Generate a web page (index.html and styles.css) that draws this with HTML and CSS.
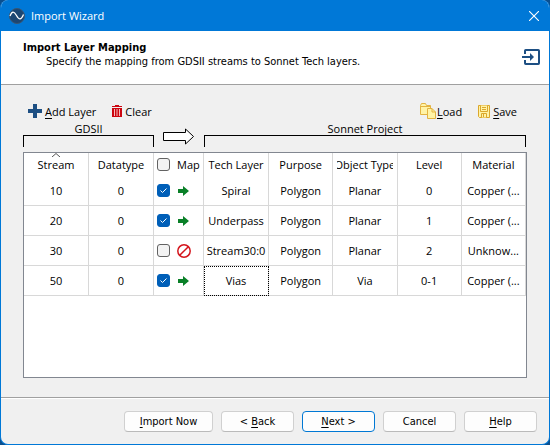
FILE: index.html
```html
<!DOCTYPE html>
<html lang="en">
<head>
    <meta charset="UTF-8">
    <meta name="viewport" content="width=device-width, initial-scale=1.0">
    <title>Import Wizard</title>
    <link rel="stylesheet" href="styles.css">
</head>
<body>
    <div class="window">
        <header class="titlebar">
            <svg class="app-icon" width="16" height="16" viewBox="0 0 16 16">
                <circle cx="8" cy="8" r="7.500" fill="#1c4672" stroke="#3a5672"/>
                <path d="M1 8C3 3 5 3 7.500 7.500S12 12.500 14.500 6.500" fill="none" stroke="#fff" stroke-width="1.300"/>
            </svg>
            <span class="title">Import Wizard</span>
            <button class="close" aria-label="Close">
                <svg width="10" height="10" viewBox="0 0 10 10"><path d="M0 0L10 10M10 0L0 10" stroke="#fff" stroke-width="1.100"/></svg>
            </button>
        </header>

        <section class="intro">
            <div>
                <h1>Import Layer Mapping</h1>
                <p>Specify the mapping from GDSII streams to Sonnet Tech layers.</p>
            </div>
            <svg width="18" height="16" viewBox="0 0 18 16" fill="none" stroke="#1d4f83">
                <path d="M3 5V1.700Q3 1 3.700 1H16.300Q17 1 17 1.700V14.300Q17 15 16.300 15H3.700Q3 15 3 14.300V11" stroke-width="2"/>
                <path d="M0 8H9" stroke-width="2"/>
                <path d="M8 4L12 8L8 12Z" fill="#1d4f83" stroke="none"/>
            </svg>
        </section>

        <main class="content">
            <div class="toolbar">
                <button class="tool">
                    <svg width="14" height="14" viewBox="0 0 14 14"><path d="M5 0H9V5H14V9H9V14H5V9H0V5H5Z" fill="#1d4f83"/></svg>
                    <span><u>A</u>dd Layer</span>
                </button>
                <button class="tool">
                    <svg width="10" height="12" viewBox="0 0 10 12"><path d="M0 1H3V0H7V1H10V2H0ZM0 3H10V12H0Z" fill="#cc0610"/><path d="M2.500 4V11M5 4V11M7.500 4V11" stroke="#f6b9bb"/></svg>
                    <span>Clear</span>
                </button>
                <button class="tool load">
                    <svg width="16" height="16" viewBox="0 0 16 16" fill="#fff3a6" stroke="#e3b341">
                        <path d="M.5 11.500V2.500L1.500 .5H5.500L6.500 2.500H10.500V11.500Z"/>
                        <path d="M.5 3.500H10" fill="none"/>
                        <path d="M7.500 5.500H12L15.500 9V15.500H7.500Z"/>
                        <path d="M12 5.500V9H15.500" fill="none"/>
                    </svg>
                    <span><u>L</u>oad</span>
                </button>
                <button class="tool save">
                    <svg width="12" height="13" viewBox="0 0 12 13" fill="#fff3a6" stroke="#dba72c">
                        <path d="M.5 .5H11.500V12.500H1.500L.5 11.500Z"/>
                        <path d="M2.500 .5V6.500H9.500V.5M3.500 12.500V8.500H8.500V12.500M4 2.500H8M4 4.500H8M5.500 9V12"/>
                    </svg>
                    <span><u>S</u>ave</span>
                </button>
            </div>

            <div class="groups">
                <div class="group gdsii"><span>GDSII</span></div>
                <svg width="32" height="18" viewBox="0 0 32 18"><path d="M.5 4.500H22.500V1L30.500 8.500L22.500 16V12.500H.5Z" fill="#fff" stroke="#000"/></svg>
                <div class="group project"><span>Sonnet Project</span></div>
            </div>

            <div class="grid">
                <table>
                    <colgroup>
                        <col class="c-stream"><col class="c-datatype"><col class="c-map"><col class="c-tech">
                        <col class="c-std"><col class="c-std"><col class="c-std"><col class="c-std">
                    </colgroup>
                    <thead>
                        <tr>
                            <th class="sorted">
                                <svg width="8" height="4" viewBox="0 0 8 4"><path d="M0 4L4 .5L8 4" fill="none" stroke="#555"/></svg>
                                Stream
                            </th>
                            <th>Datatype</th>
                            <th><label class="map"><input type="checkbox"><span>Map</span></label></th>
                            <th>Tech Layer</th>
                            <th>Purpose</th>
                            <th><span class="clip">Object Type</span></th>
                            <th>Level</th>
                            <th>Material</th>
                        </tr>
                    </thead>
                    <tbody>
                        <tr>
                            <td>10</td>
                            <td>0</td>
                            <td><div class="map"><input type="checkbox" aria-label="Map stream 10" checked><svg width="14" height="14" viewBox="0 0 14 14"><path d="M1 5H6V2L12 7L6 12V9H1Z" fill="#0a8028"/></svg></div></td>
                            <td>Spiral</td>
                            <td>Polygon</td>
                            <td>Planar</td>
                            <td>0</td>
                            <td>Copper (...</td>
                        </tr>
                        <tr>
                            <td>20</td>
                            <td>0</td>
                            <td><div class="map"><input type="checkbox" aria-label="Map stream 20" checked><svg width="14" height="14" viewBox="0 0 14 14"><path d="M1 5H6V2L12 7L6 12V9H1Z" fill="#0a8028"/></svg></div></td>
                            <td>Underpass</td>
                            <td>Polygon</td>
                            <td>Planar</td>
                            <td>1</td>
                            <td>Copper (...</td>
                        </tr>
                        <tr>
                            <td>30</td>
                            <td>0</td>
                            <td><div class="map"><input type="checkbox" aria-label="Map stream 30"><svg width="14" height="14" viewBox="0 0 14 14" fill="none" stroke="#d4141c" stroke-width="1.500"><circle cx="7" cy="7" r="6.200"/><path d="M2.700 11.300L11.300 2.700"/></svg></div></td>
                            <td>Stream30:0</td>
                            <td>Polygon</td>
                            <td>Planar</td>
                            <td>2</td>
                            <td>Unknow...</td>
                        </tr>
                        <tr>
                            <td>50</td>
                            <td>0</td>
                            <td><div class="map"><input type="checkbox" aria-label="Map stream 50" checked><svg width="14" height="14" viewBox="0 0 14 14"><path d="M1 5H6V2L12 7L6 12V9H1Z" fill="#0a8028"/></svg></div></td>
                            <td class="focused">Vias</td>
                            <td>Polygon</td>
                            <td>Via</td>
                            <td>0-1</td>
                            <td>Copper (...</td>
                        </tr>
                    </tbody>
                </table>
            </div>
        </main>

        <footer class="buttons">
            <button class="btn wide"><u>I</u>mport Now</button>
            <button class="btn">&lt; <u>B</u>ack</button>
            <button class="btn default"><u>N</u>ext &gt;</button>
            <button class="btn">Cancel</button>
            <button class="btn"><u>H</u>elp</button>
        </footer>
    </div>
</body>
</html>
```
FILE: styles.css
```css
* {
    box-sizing: border-box;
}
body {
    margin: 0;
    background: #0a4f8f;
    font-family: "Open Sans", "Noto Sans", sans-serif;
    font-size: 11px;
    color: #000;
}
button {
    font: inherit;
    color: inherit;
    padding: 0;
    border: none;
    background: none;
}
svg {
    display: block;
    flex: none;
}
u {
    text-underline-offset: 2px;
}
.window {
    display: flex;
    flex-direction: column;
    min-height: 100vh;
    border: 1px solid #0078d7;
    border-top: none;
    border-radius: 8px;
    background: #f0f0f0;
    overflow: hidden;
}
.titlebar {
    display: flex;
    align-items: center;
    gap: 6px;
    height: 31px;
    padding: 0 10px 0 8px;
    background: #0078d7;
    color: #fff;
}
.close {
    margin-left: auto;
}
.intro {
    display: flex;
    justify-content: space-between;
    height: 54px;
    padding: 10px 9px 0 22px;
    background: #fff;
    border-bottom: 1px solid #a0a0a0;
    font-family: "DejaVu Sans Condensed", "DejaVu Sans", sans-serif;
    line-height: 14px;
}
.intro h1 {
    margin: 0;
    font-size: 11px;
}
.intro p {
    margin: 0 0 0 23px;
}
.intro svg {
    margin-top: 8px;
}
.content {
    flex: 1;
    display: flex;
    flex-direction: column;
    padding: 16px 22px 19px;
    border-bottom: 1px solid #a0a0a0;
}
.toolbar {
    display: flex;
    height: 20px;
    padding: 0 10px 0 5px;
}
.tool {
    display: flex;
    align-items: center;
    gap: 3px;
    margin-right: 16px;
}
.load {
    margin-left: auto;
    gap: 1px;
}
.save {
    margin-right: 0;
}
.groups {
    display: flex;
    align-items: flex-end;
    height: 25px;
    gap: 9px;
}
.group {
    height: 23px;
    text-align: center;
    line-height: 12px;
}
.group::after {
    content: "";
    display: block;
    height: 11px;
    border: 1px solid #000;
    border-bottom: none;
}
.gdsii {
    width: 131px;
}
.project {
    flex: 1;
    margin-right: 1px;
}
.group span {
    display: block;
}
.grid {
    flex: 1;
    margin-top: 6px;
    border: 1px solid #828790;
    background: #fff;
}
table {
    width: 100%;
    border-collapse: separate;
    border-spacing: 0;
    table-layout: fixed;
}
.c-stream, .c-datatype, .c-tech {
    width: 65px;
}
.c-map {
    width: 50px;
}
th, td {
    height: 30px;
    padding: 0;
    border-right: 1px solid #d8d8d8;
    border-bottom: 1px solid #d8d8d8;
    font-weight: normal;
    text-align: center;
    white-space: nowrap;
}
th {
    height: 23px;
    border-bottom: none;
    line-height: 23px;
}
.sorted svg {
    margin: 0 auto -4px;
}
.clip {
    display: flex;
    justify-content: center;
    margin: 0 4px;
    overflow: hidden;
}
.map {
    display: flex;
    align-items: center;
    gap: 7px;
    padding-left: 3px;
}
input[type="checkbox"] {
    appearance: none;
    flex: none;
    width: 13px;
    height: 13px;
    margin: 0;
    border: 1px solid #626262;
    border-radius: 3px;
    background: #f3f3f3;
}
input[type="checkbox"]:checked {
    border-color: #005fb8;
    background: #005fb8 url("data:image/svg+xml,%3Csvg xmlns='http://www.w3.org/2000/svg' viewBox='0 0 11 11'%3E%3Cpath d='M2.500 5.500L4.500 7.500L8.500 3.500' fill='none' stroke='white'/%3E%3C/svg%3E");
}
.focused {
    outline: 1px dotted #000;
    outline-offset: -1px;
}
.buttons {
    display: flex;
    justify-content: flex-end;
    gap: 8px;
    padding: 12px;
    border-top: 1px solid #fff;
    font-family: "DejaVu Sans Condensed", "DejaVu Sans", sans-serif;
}
.btn {
    width: 73px;
    height: 21px;
    border: 1px solid #d0d0d0;
    border-bottom-color: #bababa;
    border-radius: 4px;
    background: #fdfdfd;
}
.wide {
    width: 89px;
}
.default {
    border-color: #0078d4;
}
```
